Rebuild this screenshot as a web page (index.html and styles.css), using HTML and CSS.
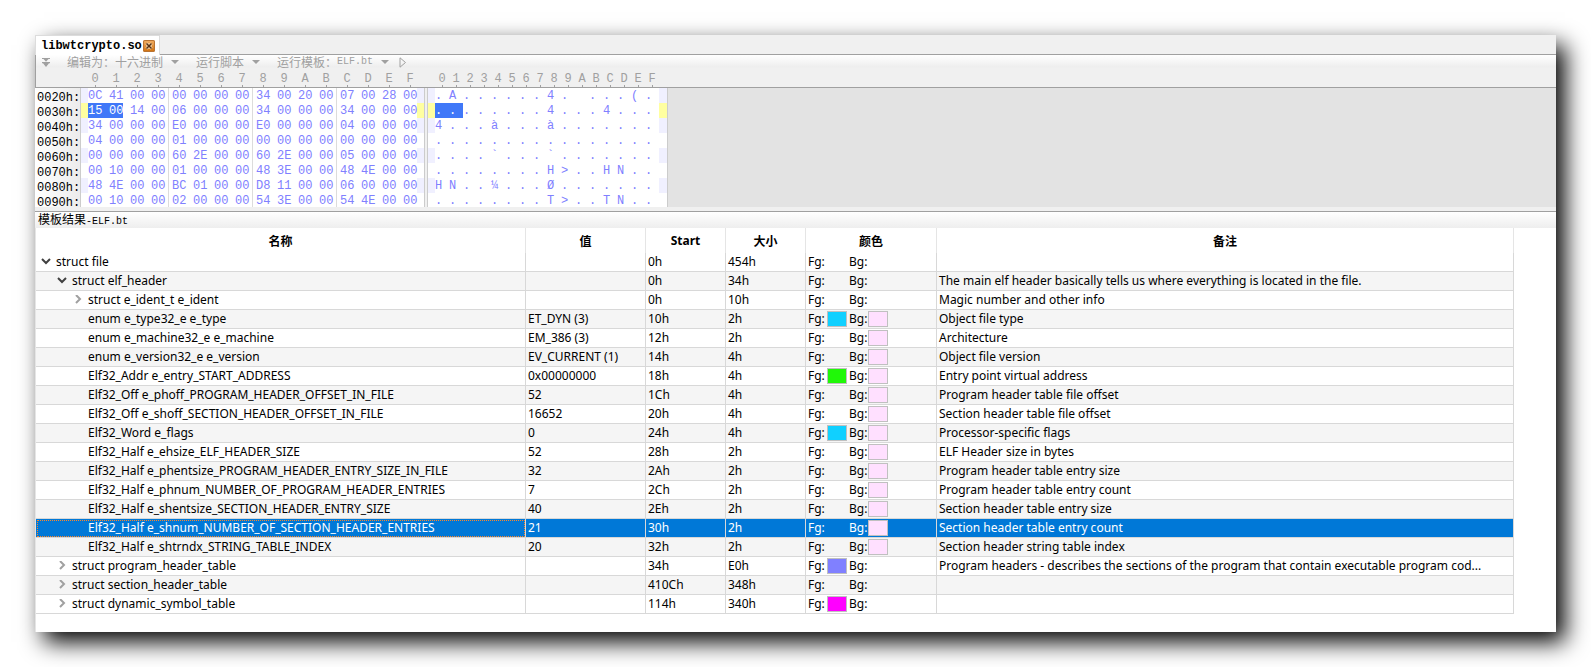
FILE: index.html
```
<!DOCTYPE html>
<html lang="zh-CN">
<head>
    <meta charset="UTF-8">
    <meta name="viewport" content="width=device-width, initial-scale=1.0">
    <title>libwtcrypto.so</title>
    <link rel="stylesheet" href="styles.css">
</head>
<body>
    <main class="window">
        <div class="tabs">
            <div class="tab">
                <span>libwtcrypto.so</span>
                <button type="button" class="tab-close" aria-label="关闭">
                    <svg width="12" height="12" viewBox="0 0 12 12">
                        <path d="M3.5 3.5l5 5M8.5 3.5l-5 5" stroke="#fbe3c0" stroke-width="3"/>
                        <path d="M3.5 3.5l5 5M8.5 3.5l-5 5" stroke="#5b3210" stroke-width="1.6"/>
                    </svg>
                </button>
            </div>
            <div class="tabs-rest"></div>
        </div>

        <div class="editor-head">
            <div class="toolbar">
                <button type="button" class="tool" aria-label="更多">
                    <svg width="8" height="9" viewBox="0 0 8 9" fill="#a0a0a0"><path d="M0 0h8v1H6.500L4 3.800 1.500 1H0zM0 4h8v1.200H7L4 9 1 5.200H0z"/></svg>
                </button>
                <button type="button" class="tool">编辑为：十六进制<i class="caret"></i></button>
                <button type="button" class="tool">运行脚本<i class="caret"></i></button>
                <button type="button" class="tool">运行模板：<span class="latin">ELF.bt</span><i class="caret"></i></button>
                <button type="button" class="tool run" aria-label="运行">
                    <svg width="8" height="11" viewBox="0 0 8 11"><path d="M1 .8v9.400L6.500 5.500z" fill="none" stroke="#a0a0a0"/></svg>
                </button>
            </div>
            <div class="ruler">
                <div class="ruler-hex" id="rulerHex"></div>
                <div class="ruler-text" id="rulerText"></div>
            </div>
        </div>

        <div class="hex-view">
            <table class="hex">
                <tbody id="hexBody"></tbody>
            </table>
        </div>

        <h2 class="panel-title">模板结果<span class="latin">-ELF.bt</span></h2>
        <div class="results">
            <table class="tree">
                <colgroup>
                    <col class="c-name"><col class="c-value"><col class="c-num"><col class="c-num"><col class="c-color"><col>
                </colgroup>
                <thead>
                    <tr><th>名称</th><th>值</th><th>Start</th><th>大小</th><th>颜色</th><th>备注</th></tr>
                </thead>
                <tbody id="treeBody"></tbody>
            </table>
        </div>
    </main>
    <script src="script.js"></script>
</body>
</html>
```
FILE: styles.css
```
* {
    box-sizing: border-box;
}
body {
    margin: 0;
    padding: 35px;
    background: #fff;
    color: #000;
    font-family: "Noto Sans", "Noto Sans CJK SC", sans-serif;
    font-size: 12px;
}
button {
    padding: 0;
    border: none;
    background: none;
    font: inherit;
    color: inherit;
}
table {
    border-collapse: separate;
    border-spacing: 0;
    table-layout: fixed;
}
.window {
    background: #fff;
    box-shadow: 9px 10px 22px #000;
}

/* tabs */
.tabs {
    display: flex;
    height: 20px;
    background: #f0f0f0;
}
.tab {
    display: flex;
    align-items: center;
    gap: 1px;
    width: 125px;
    padding-left: 5px;
    background: #fff;
    border: 1px solid #dcdcdc;
    border-bottom: none;
    font-family: "Liberation Mono", monospace;
    font-weight: bold;
    white-space: nowrap;
}
.tabs-rest {
    flex: 1;
    border-bottom: 1px solid #a0a0a0;
}
.tab-close {
    width: 12px;
    height: 12px;
    border-radius: 2px;
    background: linear-gradient(#f2b066, #cf6f0c);
    box-shadow: inset 0 0 0 1px #b87333;
}
.tab-close svg {
    display: block;
}

/* toolbar + ruler */
.editor-head {
    border-left: 1px solid #a0a0a0;
    border-bottom: 1px solid #a0a0a0;
    background: linear-gradient(#fff, #eee 12px, #f0f0f0 13px);
}
.toolbar {
    display: flex;
    align-items: center;
    gap: 17px;
    height: 14px;
    padding-left: 6px;
    color: #a0a0a0;
    font-family: "Noto Sans CJK SC", sans-serif;
}
.tool {
    display: flex;
    align-items: center;
    height: 14px;
    line-height: 14px;
}
.run {
    margin-left: -7px;
}
.latin {
    font-family: "Liberation Mono", monospace;
    font-size: 10px;
}
.caret {
    margin-left: 8px;
    border: 4px solid transparent;
    border-top-color: #a0a0a0;
    border-bottom: none;
}
.ruler {
    display: flex;
    height: 18px;
    padding-left: 52px;
    color: #a0a0a0;
    font-family: "Liberation Mono", monospace;
    line-height: 20px;
    text-align: center;
}
.ruler-hex {
    display: flex;
    gap: 7px;
    margin-right: 18px;
}
.ruler-text {
    display: flex;
}
.ruler span {
    width: 14px;
    background: linear-gradient(#a0a0a0, #a0a0a0) 7px 100% / 1px 2px no-repeat;
}

/* hex */
.hex-view {
    overflow: hidden;
    height: 123px;
    background: #e3e3e3;
    border-bottom: 4px solid #f0f0f0;
}
.hex {
    width: 633px;
    background: #fff;
    border-right: 1px solid #ccc;
    color: #8080ff;
    font-family: "Liberation Mono", monospace;
}
.hex th,
.hex td {
    height: 15px;
    padding: 2px 0 0;
    text-align: left;
    white-space: nowrap;
    line-height: 13px;
    vertical-align: top;
}
.hex th {
    width: 46px;
    padding: 5px 0 0 2px;
    line-height: 10px;
    border-right: 1px solid #ccc;
    background: linear-gradient(to right, #fff, #ececec);
    color: #000;
    font-weight: normal;
}
.hex .edge {
    width: 7px;
}
.hex .edge-wide {
    width: 8px;
}
.hex .byte {
    width: 21px;
}
.hex .byte-last,
.hex .char {
    width: 14px;
}
.hex .split {
    width: 4px;
    background: #f0f0f0;
    border: 1px solid #ccc;
    border-width: 0 1px;
}
.hex .group {
    background: linear-gradient(#dcdcdc, #dcdcdc) 17px 0 / 1px 100% no-repeat;
}
.hex tr:nth-child(odd) .mark {
    background: #f0f0ff;
}
.hex .current .mark {
    background: #ffffa0;
}
.hex .picked {
    background: linear-gradient(#4078f8, #4078f8) no-repeat;
    color: #fff;
}
.hex .picked-end {
    background-size: 14px 100%;
}

/* template results */
.panel-title {
    height: 17px;
    margin: 0;
    padding-left: 3px;
    border-top: 1px solid #a0a0a0;
    background: linear-gradient(#fff, #eee);
    font-family: "Noto Sans CJK SC", sans-serif;
    font-size: 12px;
    font-weight: normal;
    line-height: 14px;
}
.results {
    padding: 0 42px 18px 0;
    border-left: 1px solid #e5e5e5;
}
.tree {
    width: 100%;
}
.c-name {
    width: 490px;
}
.c-value {
    width: 120px;
}
.c-num {
    width: 80px;
}
.c-color {
    width: 131px;
}
.tree th {
    height: 25px;
    padding: 0;
    border-right: 1px solid #e5e5e5;
    font-weight: bold;
}
.tree td {
    height: 19px;
    padding: 0 2px;
    border-right: 1px solid #d8d8d8;
    border-bottom: 1px solid #d8d8d8;
    line-height: 18px;
    overflow: hidden;
    text-overflow: ellipsis;
    white-space: nowrap;
}
.tree tr:nth-child(even) td {
    background: #f5f5f5;
}
.tree .selected td {
    background: #0078d7;
    color: #fff;
}
.tree .selected td:first-child {
    outline: 1px dotted #ff8728;
    outline-offset: -2px;
}
.tree .level-0 {
    padding-left: 4px;
}
.tree .level-1 {
    padding-left: 20px;
}
.tree .level-2 {
    padding-left: 36px;
}
.tree .leaf {
    padding-left: 52px;
}
.toggle {
    width: 16px;
    height: 12px;
    vertical-align: middle;
}
.toggle svg {
    display: block;
    fill: none;
    stroke: #a0a0a0;
    stroke-width: 2;
}
.toggle[aria-expanded="true"] svg {
    stroke: #404040;
}
.colors {
    display: flex;
    align-items: center;
    height: 18px;
}
.colors span {
    width: 19px;
}
.swatch {
    width: 20px;
    height: 16px;
    margin-right: 2px;
    border: 1px solid transparent;
}
.swatch.filled {
    border-color: #c0c0c0;
}
```
FILE: script.js
```
const DIGITS = '0123456789ABCDEF';

const dump = [
    ['0020h:', '0C 41 00 00 00 00 00 00 34 00 20 00 07 00 28 00', '.A......4. ...(.'],
    ['0030h:', '15 00 14 00 06 00 00 00 34 00 00 00 34 00 00 00', '........4...4...'],
    ['0040h:', '34 00 00 00 E0 00 00 00 E0 00 00 00 04 00 00 00', '4...à...à.......'],
    ['0050h:', '04 00 00 00 01 00 00 00 00 00 00 00 00 00 00 00', '................'],
    ['0060h:', '00 00 00 00 60 2E 00 00 60 2E 00 00 05 00 00 00', '....`...`.......'],
    ['0070h:', '00 10 00 00 01 00 00 00 48 3E 00 00 48 4E 00 00', '........H>..HN..'],
    ['0080h:', '48 4E 00 00 BC 01 00 00 D8 11 00 00 06 00 00 00', 'HN..¼...Ø.......'],
    ['0090h:', '00 10 00 00 02 00 00 00 54 3E 00 00 54 4E 00 00', '........T>..TN..']
];

// level, open (true/false, null = leaf), name, value, start, size, fg, bg, comment
const PINK = '#ffe0ff';
const rows = [
    [0, true, 'struct file', '', '0h', '454h', '', '', ''],
    [1, true, 'struct elf_header', '', '0h', '34h', '', '', 'The main elf header basically tells us where everything is located in the file.'],
    [2, false, 'struct e_ident_t e_ident', '', '0h', '10h', '', '', 'Magic number and other info'],
    [2, null, 'enum e_type32_e e_type', 'ET_DYN (3)', '10h', '2h', '#10d0ff', PINK, 'Object file type'],
    [2, null, 'enum e_machine32_e e_machine', 'EM_386 (3)', '12h', '2h', '', PINK, 'Architecture'],
    [2, null, 'enum e_version32_e e_version', 'EV_CURRENT (1)', '14h', '4h', '', PINK, 'Object file version'],
    [2, null, 'Elf32_Addr e_entry_START_ADDRESS', '0x00000000', '18h', '4h', '#20f808', PINK, 'Entry point virtual address'],
    [2, null, 'Elf32_Off e_phoff_PROGRAM_HEADER_OFFSET_IN_FILE', '52', '1Ch', '4h', '', PINK, 'Program header table file offset'],
    [2, null, 'Elf32_Off e_shoff_SECTION_HEADER_OFFSET_IN_FILE', '16652', '20h', '4h', '', PINK, 'Section header table file offset'],
    [2, null, 'Elf32_Word e_flags', '0', '24h', '4h', '#10d0ff', PINK, 'Processor-specific flags'],
    [2, null, 'Elf32_Half e_ehsize_ELF_HEADER_SIZE', '52', '28h', '2h', '', PINK, 'ELF Header size in bytes'],
    [2, null, 'Elf32_Half e_phentsize_PROGRAM_HEADER_ENTRY_SIZE_IN_FILE', '32', '2Ah', '2h', '', PINK, 'Program header table entry size'],
    [2, null, 'Elf32_Half e_phnum_NUMBER_OF_PROGRAM_HEADER_ENTRIES', '7', '2Ch', '2h', '', PINK, 'Program header table entry count'],
    [2, null, 'Elf32_Half e_shentsize_SECTION_HEADER_ENTRY_SIZE', '40', '2Eh', '2h', '', PINK, 'Section header table entry size'],
    [2, null, 'Elf32_Half e_shnum_NUMBER_OF_SECTION_HEADER_ENTRIES', '21', '30h', '2h', '', PINK, 'Section header table entry count'],
    [2, null, 'Elf32_Half e_shtrndx_STRING_TABLE_INDEX', '20', '32h', '2h', '', PINK, 'Section header string table index'],
    [1, false, 'struct program_header_table', '', '34h', 'E0h', '#8080ff', '', 'Program headers - describes the sections of the program that contain executable program cod...'],
    [1, false, 'struct section_header_table', '', '410Ch', '348h', '', '', ''],
    [1, false, 'struct dynamic_symbol_table', '', '114h', '340h', '#ff00ff', '', '']
];
const selectedStart = '30h';

function ruler(id) {
    document.getElementById(id).innerHTML = DIGITS.split('').map(d => `<span>${d}</span>`).join('');
}

function escapeHtml(text) {
    return text.replace(/&/g, '&amp;').replace(/</g, '&lt;').replace(/>/g, '&gt;');
}

function hexRow([address, bytes, text]) {
    const current = address === '0030h:';
    const hex = bytes.split(' ').map((b, i) => {
        let cls = i === 15 ? 'byte-last' : 'byte';
        if (i === 3 || i === 7 || i === 11) cls += ' group';
        if (current && i < 2) cls += ' picked';
        if (current && i === 1) cls += ' picked-end';
        return `<td class="${cls}">${b}</td>`;
    }).join('');
    const chars = text.split('').map((c, i) =>
        `<td class="char${current && i < 2 ? ' picked' : ''}">${escapeHtml(c)}</td>`
    ).join('');
    return `<tr class="${current ? 'current' : ''}"><th scope="row">${address}</th>` +
        `<td class="edge mark"></td>${hex}<td class="edge mark"></td><td class="split"></td>` +
        `<td class="edge mark"></td>${chars}<td class="edge-wide mark"></td></tr>`;
}

function toggle(open) {
    if (open === null) return '';
    const path = open ? 'M1 3l4 4 4-4' : 'M3 1l4 4-4 4';
    return `<button type="button" class="toggle" aria-expanded="${open}" aria-label="展开">` +
        `<svg width="12" height="12" viewBox="-1 1 12 12"><path d="${path}"/></svg></button>`;
}

function swatch(color) {
    return color ? `<i class="swatch filled" style="background:${color}"></i>` : '<i class="swatch"></i>';
}

function treeRow([level, open, name, value, start, size, fg, bg, comment]) {
    const cls = open === null ? 'leaf' : 'level-' + level;
    return `<tr class="${start === selectedStart ? 'selected' : ''}">` +
        `<td class="${cls}">${toggle(open)}${name}</td><td>${value}</td><td>${start}</td><td>${size}</td>` +
        `<td><div class="colors"><span>Fg:</span>${swatch(fg)}<span>Bg:</span>${swatch(bg)}</div></td>` +
        `<td>${comment}</td></tr>`;
}

ruler('rulerHex');
ruler('rulerText');
document.getElementById('hexBody').innerHTML = dump.map(hexRow).join('');
document.getElementById('treeBody').innerHTML = rows.map(treeRow).join('');
```
